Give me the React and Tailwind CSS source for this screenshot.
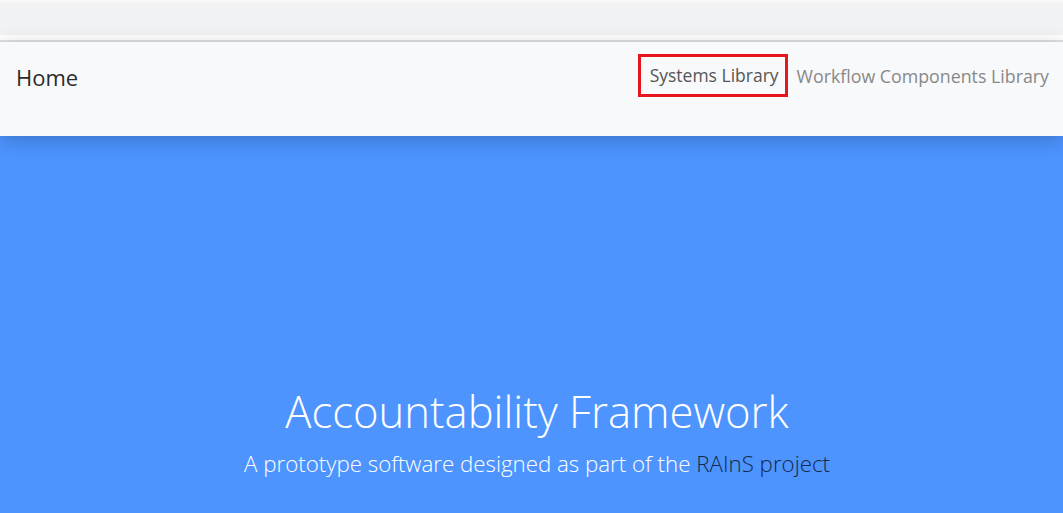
const App = () => {
  return (
    <div className="min-h-[513px] bg-[#4d94ff] font-['Open_Sans',sans-serif]">
      {/* browser chrome strip */}
      <div className="h-[3px] bg-[#f7f7f8]" />
      <div className="h-[32px] bg-[#f1f2f4]" />
      <div className="h-[5px] bg-white" />
      <div className="h-[2px] bg-[#dfe0e3]" />

      {/* Navbar */}
      <nav className="relative z-10 flex h-[94px] items-start justify-between bg-[#f8f9fb] pl-4 pr-[14px] shadow-[0_4px_18px_rgba(0,0,0,0.22)]">
        <a className="mt-[20px] text-[22px] leading-[30px] text-[#2b2b2b]">Home</a>
        <div className="mt-[12px] flex items-center">
          <a className="border-[3px] border-[#e8141e] py-[6px] pl-[9px] pr-[6px] text-[17.5px] leading-[25px] text-[#555]">
            Systems Library
          </a>
          <a className="ml-[9px] mt-[1px] text-[17.8px] leading-[25px] text-[#888]">Workflow Components Library</a>
        </div>
      </nav>

      {/* Hero */}
      <section className="flex flex-col items-center pl-[11px] pt-[247px] text-white">
        <h1 className="text-[43.6px] font-light leading-[56px]">Accountability Framework</h1>
        <p className="mt-[10px] text-[22.3px] font-light leading-[30px]">
          A prototype software designed as part of the{' '}
          <a className="text-[#15294a]">RAInS project</a>
        </p>
      </section>
    </div>
  );
};

export default App;
